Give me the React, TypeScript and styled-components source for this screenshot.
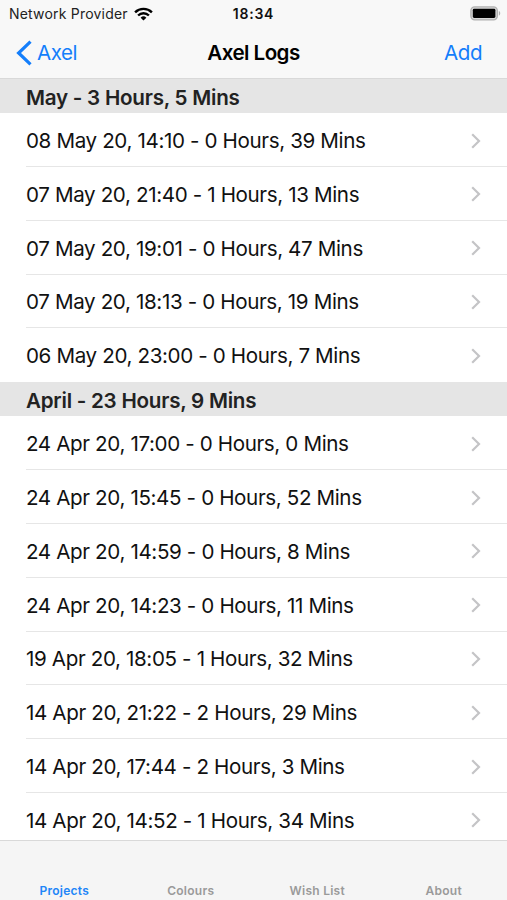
import React from "react";
import styled, { createGlobalStyle } from "styled-components";

const GlobalStyle = createGlobalStyle`
  *, *::before, *::after { box-sizing: border-box; }
  body { margin: 0; background: #fff; font-family: Inter, "Liberation Sans", sans-serif; }
`;

const Screen = styled.div`
  display: flex;
  flex-direction: column;
  width: 507px;
  height: 900px;
  overflow: hidden;
  background: #fff;
  color: #111;
`;

const Header = styled.header`
  flex: none;
  height: 79px;
  background: #f8f8f8;
  border-bottom: 1px solid #d9d9d9;
`;

const StatusBar = styled.div`
  display: grid;
  grid-template-columns: 1fr auto 1fr;
  align-items: center;
  height: 27px;
  padding: 0 6px;
  line-height: 18px;
`;

const Carrier = styled.div`
  display: flex;
  align-items: center;
  gap: 6px;
  padding-left: 3px;
  font-size: 14px;
  letter-spacing: 0.2px;
  white-space: nowrap;
  color: #222;
`;

const Clock = styled.div`
  font-size: 14px;
  font-weight: 600;
  letter-spacing: 0.75px;
`;

const BatterySlot = styled.div`
  display: flex;
  justify-content: flex-end;
`;

const NavBar = styled.nav`
  display: grid;
  grid-template-columns: 1fr auto 1fr;
  align-items: center;
  height: 51px;
  padding: 0 16px;
  font-size: 20.6px;
  line-height: 26px;
`;

const NavButton = styled.a<{ $end?: boolean }>`
  display: flex;
  align-items: center;
  gap: 5px;
  justify-self: ${(p) => (p.$end ? "end" : "start")};
  padding-right: ${(p) => (p.$end ? "9px" : "0")};
  color: #147efb;
  letter-spacing: -0.5px;
`;

const Title = styled.h1`
  margin: 0;
  color: #000;
  font-size: 20.6px;
  font-weight: 600;
  letter-spacing: -0.55px;
`;

const List = styled.main`
  flex: 1;
  min-height: 0;
  overflow: hidden;
`;

const SectionHeader = styled.h2`
  display: flex;
  align-items: center;
  height: 34.2px;
  margin: 0;
  padding: 2px 26px 0;
  background: #e5e5e5;
  color: #222;
  font-size: 20.6px;
  font-weight: 600;
  letter-spacing: -0.24px;
`;

const Row = styled.div`
  display: flex;
  align-items: center;
  justify-content: space-between;
  height: 53.8px;
  margin-left: 26px;
  padding: 2px 26px 0 0;
  border-bottom: 1px solid #e6e6e6;
  font-size: 20.6px;
  letter-spacing: -0.37px;
  white-space: nowrap;
  &:last-child { border-bottom-color: transparent; }
`;

const TabBar = styled.footer`
  display: grid;
  grid-template-columns: repeat(4, 1fr);
  flex: none;
  height: 60px;
  padding-left: 1px;
  border-top: 1px solid #d9d9d9;
  background: #f5f5f5;
`;

const Tab = styled.a<{ $active?: boolean }>`
  display: flex;
  align-items: flex-end;
  justify-content: center;
  padding-bottom: 1px;
  color: ${(p) => (p.$active ? "#2185f8" : "#9a9a9a")};
  font-size: 12px;
  font-weight: 600;
  line-height: 16px;
  letter-spacing: 0.25px;
`;

const WifiIcon = () => (
  <svg width="19" height="14" viewBox="0 0 19 14">
    <g fill="none" stroke="#000" strokeWidth="2.4">
      <path d="M1.1 5.3a12 12 0 0 1 16.8 0" />
      <path d="M4.1 8.5a7.7 7.7 0 0 1 10.8 0" />
    </g>
    <path d="M9.5 13.6 6.6 10.8a4.1 4.1 0 0 1 5.8 0z" />
  </svg>
);

const BatteryIcon = () => (
  <svg width="31" height="15" viewBox="0 0 31 15">
    <rect x="0.9" y="0.9" width="26.4" height="13" rx="3.8" fill="#d8d8d8" stroke="#b0b0b0" strokeWidth="1.4" />
    <rect x="2.8" y="2.8" width="22.6" height="9.2" rx="1.4" />
    <path d="M28.8 5.1c1.9.7 1.9 4 0 4.7z" fill="#b0b0b0" />
  </svg>
);

const BackIcon = () => (
  <svg width="16" height="26" viewBox="0 0 16 26">
    <path d="M14.5 1.6 2.6 13l11.9 11.4" fill="none" stroke="#147efb" strokeWidth="3.2" />
  </svg>
);

const Chevron = () => (
  <svg width="10" height="16" viewBox="0 0 10 16">
    <path d="M1.2 1.3 8 8l-6.8 6.7" fill="none" stroke="#c4c4c6" strokeWidth="2.2" />
  </svg>
);

const sections = [
  {
    title: "May - 3 Hours, 5 Mins",
    logs: [
      "08 May 20, 14:10 - 0 Hours, 39 Mins",
      "07 May 20, 21:40 - 1 Hours, 13 Mins",
      "07 May 20, 19:01 - 0 Hours, 47 Mins",
      "07 May 20, 18:13 - 0 Hours, 19 Mins",
      "06 May 20, 23:00 - 0 Hours, 7 Mins",
    ],
  },
  {
    title: "April - 23 Hours, 9 Mins",
    logs: [
      "24 Apr 20, 17:00 - 0 Hours, 0 Mins",
      "24 Apr 20, 15:45 - 0 Hours, 52 Mins",
      "24 Apr 20, 14:59 - 0 Hours, 8 Mins",
      "24 Apr 20, 14:23 - 0 Hours, 11 Mins",
      "19 Apr 20, 18:05 - 1 Hours, 32 Mins",
      "14 Apr 20, 21:22 - 2 Hours, 29 Mins",
      "14 Apr 20, 17:44 - 2 Hours, 3 Mins",
      "14 Apr 20, 14:52 - 1 Hours, 34 Mins",
    ],
  },
];

const tabs = ["Projects", "Colours", "Wish List", "About"];

export default function App() {
  return (
    <Screen>
      <GlobalStyle />
      <Header>
        <StatusBar>
          <Carrier>
            <span>Network Provider</span>
            <WifiIcon />
          </Carrier>
          <Clock>18:34</Clock>
          <BatterySlot>
            <BatteryIcon />
          </BatterySlot>
        </StatusBar>
        <NavBar>
          <NavButton>
            <BackIcon />
            <span>Axel</span>
          </NavButton>
          <Title>Axel Logs</Title>
          <NavButton $end>Add</NavButton>
        </NavBar>
      </Header>
      <List>
        {sections.map((section) => (
          <section key={section.title}>
            <SectionHeader>{section.title}</SectionHeader>
            {section.logs.map((log) => (
              <Row key={log}>
                <span>{log}</span>
                <Chevron />
              </Row>
            ))}
          </section>
        ))}
      </List>
      <TabBar>
        {tabs.map((tab) => (
          <Tab key={tab} $active={tab === "Projects"}>
            {tab}
          </Tab>
        ))}
      </TabBar>
    </Screen>
  );
}
